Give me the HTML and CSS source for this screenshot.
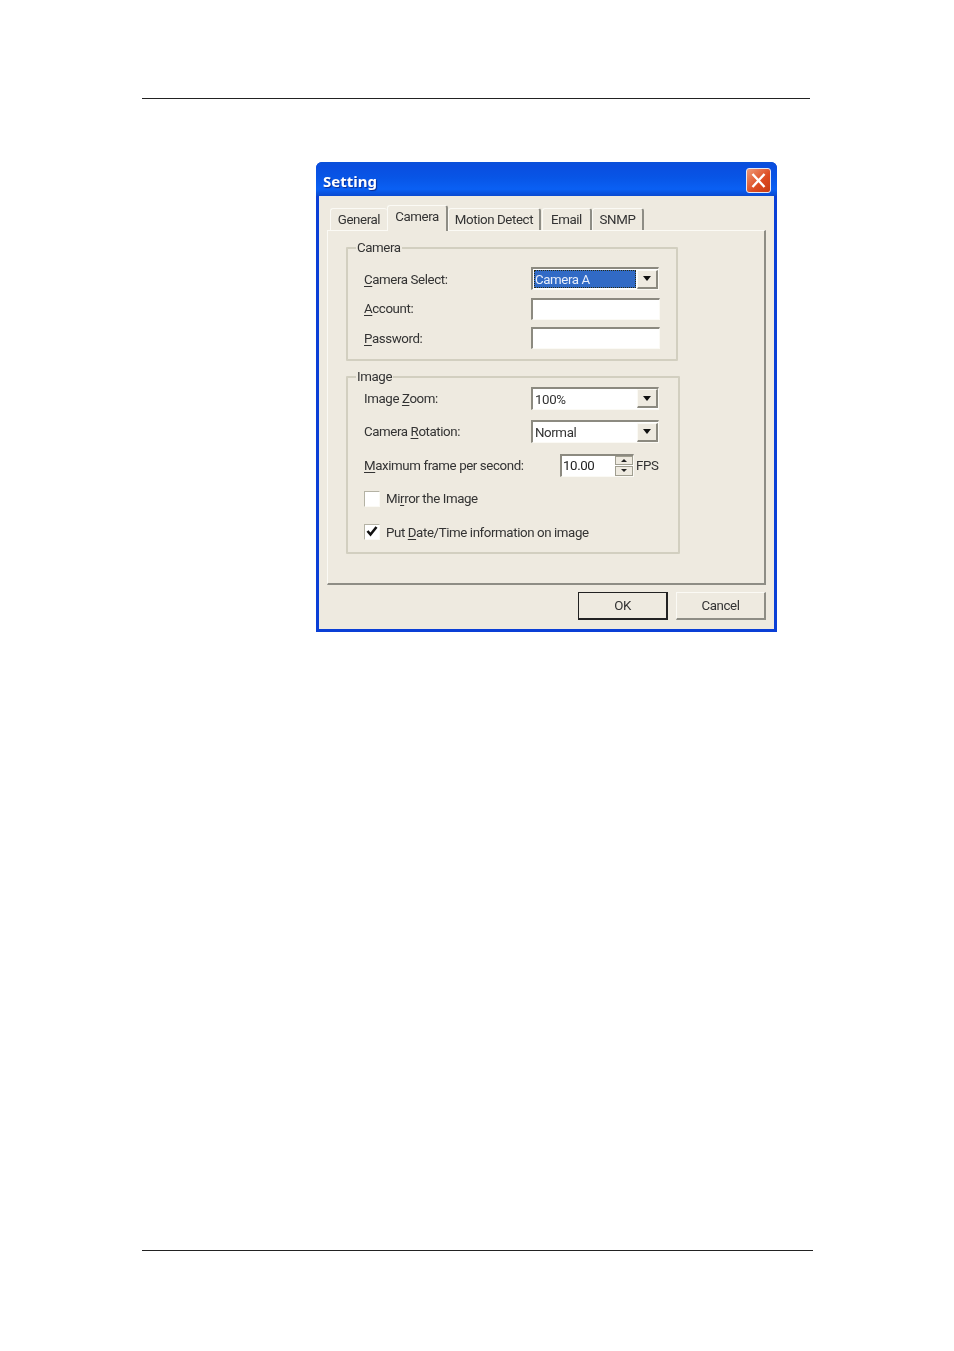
FILE: index.html
```html
<!DOCTYPE html>
<html lang="en">
<head>
<meta charset="utf-8">
<title>Setting</title>
<link rel="stylesheet" href="styles.css">
</head>
<body>
<div class="rule rule-top"></div>
<section class="dialog">
  <header class="titlebar">
    <span class="title">Setting</span>
    <span class="close">
      <svg viewBox="0 0 23 23" width="23" height="23"><path d="M5.5 5 L17.5 18 M17.5 5 L5.5 18" stroke="#fff" stroke-width="2.4" fill="none"/></svg>
    </span>
  </header>
  <div class="client">
    <nav class="tabs">
      <span class="tab tab-general">General</span>
      <span class="tab tab-camera">Camera</span>
      <span class="tab tab-motion">Motion Detect</span>
      <span class="tab tab-email">Email</span>
      <span class="tab tab-snmp">SNMP</span>
    </nav>
    <div class="panel">
      <fieldset class="group group-camera">
        <legend>Camera</legend>
        <div class="rows rows-camera">
          <div class="row">
            <label class="label"><u>C</u>amera Select:</label>
            <div class="combo"><span class="value selected">Camera A</span><span class="arrow"><i></i></span></div>
          </div>
          <div class="row row-end">
            <label class="label"><u>A</u>ccount:</label>
            <div class="field"></div>
          </div>
          <div class="row row-end">
            <label class="label"><u>P</u>assword:</label>
            <div class="field"></div>
          </div>
        </div>
      </fieldset>
      <fieldset class="group group-image">
        <legend>Image</legend>
        <div class="rows rows-image">
          <div class="row">
            <label class="label">Image <u>Z</u>oom:</label>
            <div class="combo"><span class="value">100%</span><span class="arrow"><i></i></span></div>
          </div>
          <div class="row">
            <label class="label">Camera <u>R</u>otation:</label>
            <div class="combo"><span class="value">Normal</span><span class="arrow"><i></i></span></div>
          </div>
          <div class="row">
            <label class="label label-wide"><u>M</u>aximum frame per second:</label>
            <div class="spin"><span class="spin-value">10.00</span><span class="spin-btns"><b class="up"><i></i></b><b class="down"><i></i></b></span></div>
            <span class="unit">FPS</span>
          </div>
          <div class="row">
            <span class="check"></span>
            <label>Mi<u>r</u>ror the Image</label>
          </div>
          <div class="row">
            <span class="check">
              <svg viewBox="0 0 14 14" width="14" height="14"><path d="M2.5 6 L5.5 9.5 L11.5 2" stroke="#111" stroke-width="2.6" fill="none"/></svg>
            </span>
            <label>Put <u>D</u>ate/Time information on image</label>
          </div>
        </div>
      </fieldset>
    </div>
    <footer class="actions">
      <button class="btn btn-default">OK</button>
      <button class="btn">Cancel</button>
    </footer>
  </div>
</section>
<div class="rule rule-bottom"></div>
</body>
</html>
```

FILE: styles.css
```css
html, body { margin: 0; padding: 0; background: #fff; }
body { height: 1351px; overflow: hidden; font-family: Roboto, "Liberation Sans", Arial, sans-serif; font-size: 13.3px; letter-spacing: -0.4px; color: #222; }
.rule { height: 1px; background: #222; margin-left: 142px; }
.rule-top { margin-top: 98px; width: 668px; }
.rule-bottom { margin-top: 618px; width: 671px; }

.dialog {
  box-sizing: border-box; width: 461px; height: 470px; margin: 63px 0 0 316px;
  display: flex; flex-direction: column;
  background: #0a3fd6; border-radius: 6px 6px 0 0;
  padding: 0 3px 3px 3px;
  filter: blur(0.35px);
}
.titlebar {
  height: 34px; margin: 0 -3px; flex: none; padding: 0 6px 0 7px;
  display: flex; align-items: center; justify-content: space-between;
  border-radius: 6px 6px 0 0;
  background: linear-gradient(#0a50d8 0, #0a4ee0 12%, #0855e6 45%, #0a60f4 80%, #0a4ad0 100%);
}
.title { color: #fff; font-family: "Noto Sans", sans-serif; font-weight: 700; font-size: 15px; letter-spacing: 0; text-shadow: 1px 1px 1px #0a2a90; padding-top: 4px; }
.close {
  box-sizing: border-box; width: 25px; height: 25px; margin-top: 2px; border: 1px solid #e8e8f0; border-radius: 3px;
  background: linear-gradient(135deg, #ef9a78, #dc4a20 60%, #c83c14);
  display: flex;
}
.client { flex: 1; background: #eeeae0; padding: 9px 8px 0 8px; display: flex; flex-direction: column; }

.tabs { display: flex; height: 25px; align-items: flex-end; padding-left: 3px; position: relative; z-index: 1; }
.tab {
  box-sizing: border-box; height: 22px; line-height: 22px; text-align: center;
  border-top: 1px solid #fbfaf5; border-left: 1px solid #fbfaf5; border-right: 2px solid #8e8d85;
  border-radius: 3px 3px 0 0; background: #eeeae0; color: #333;
}
.tab-general { width: 57px; border-right: 0; }
.tab-camera { width: 61px; height: 26px; line-height: 22px; margin-bottom: -1px; padding-bottom: 3px; }
.tab-motion { width: 93px; margin-left: 0; }
.tab-email { width: 50px; margin-left: 1px; }
.tab-snmp { width: 52px; }

.panel {
  box-sizing: border-box; width: 439px; height: 355px;
  border-top: 1px solid #fbfaf5; border-left: 1px solid #fbfaf5;
  border-right: 2px solid #8e8d85; border-bottom: 2px solid #8e8d85;
  padding: 9px 0 0 18px;
}
.group {
  box-sizing: border-box; margin: 0; min-width: 0;
  border: 2px solid #d2cfc0; border-radius: 1px;
  padding: 0 0 0 16px;
}
.group legend { margin-left: -8px; padding: 0 1px; line-height: 16px; color: #333; }
.group-camera { width: 332px; height: 121px; padding-top: 11px; }
.group-image { width: 334px; height: 185px; margin-top: 8px; padding-top: 1px; }

.rows { display: flex; flex-direction: column; }
.rows-camera { gap: 6.5px; }
.rows-camera .label { padding-top: 1px; }
.rows-image { gap: 9.5px; }
.row { display: flex; align-items: center; height: 23px; color: #333; }
.rows-image .row { height: 24px; }
.row-end { align-items: flex-end; }
.row-end .label { align-self: center; }
.label { width: 167px; flex: none; }
.label-wide { width: 196px; }
u { text-underline-offset: 2px; }

.combo, .field, .spin {
  box-sizing: border-box; background: #fff;
  border-top: 2px solid #8c8a80; border-left: 2px solid #8c8a80;
  border-right: 1px solid #fbfaf5; border-bottom: 1px solid #fbfaf5;
}
.combo { width: 128px; height: 23px; display: flex; align-items: center; padding: 0 0 0 1px; }
.value { flex: 1; padding-left: 1px; line-height: 20px; height: 18px; }
.selected { background: #316ac5; color: #e8eefa; outline: 1px dotted #2a2a10; outline-offset: -1px; }
.arrow {
  box-sizing: border-box; width: 21px; height: 19px; margin-left: 1px; flex: none; background: #eeeae0;
  border: 1px solid #fbfaf5; border-right: 2px solid #8c8a80; border-bottom: 2px solid #8c8a80;
  display: flex; align-items: center; justify-content: center;
}
.arrow i { width: 0; height: 0; border: 4.5px solid transparent; border-top: 5px solid #111; border-bottom: 0; }
.field { width: 129px; height: 22px; }

.spin { width: 74px; height: 23px; display: flex; padding-left: 1px; }
.spin-value { flex: 1; line-height: 20px; color: #222; }
.spin-btns { width: 18px; display: flex; flex-direction: column; gap: 1px; background: #fff; }
.spin-btns b { flex: 1; background: #eeeae0; border: 1px solid #a09e90; display: flex; align-items: center; justify-content: center; }
.spin-btns i { width: 0; height: 0; border: 3px solid transparent; }
.up i { border-top: 0; border-bottom: 3px solid #222; }
.down i { border-bottom: 0; border-top: 3px solid #222; }
.unit { margin-left: 2px; }

.check {
  box-sizing: border-box; width: 16px; height: 16px; flex: none; margin-right: 6px;
  background: #fff; display: flex;
  border-top: 1px solid #b4b2a4; border-left: 1px solid #b4b2a4;
  border-right: 1px solid #fbfaf5; border-bottom: 1px solid #fbfaf5;
}

.actions { display: flex; justify-content: flex-end; gap: 8px; padding-top: 7px; width: 439px; }
.btn {
  box-sizing: border-box; width: 90px; height: 28px; padding: 0; background: #eeeae0; color: #333;
  font: inherit; letter-spacing: inherit; border: 1px solid #fbfaf5; border-right: 2px solid #8e8d85; border-bottom: 2px solid #8e8d85;
}
.btn-default { border: 2px solid #222; border-top-width: 1px; border-left-width: 1px; }
```
